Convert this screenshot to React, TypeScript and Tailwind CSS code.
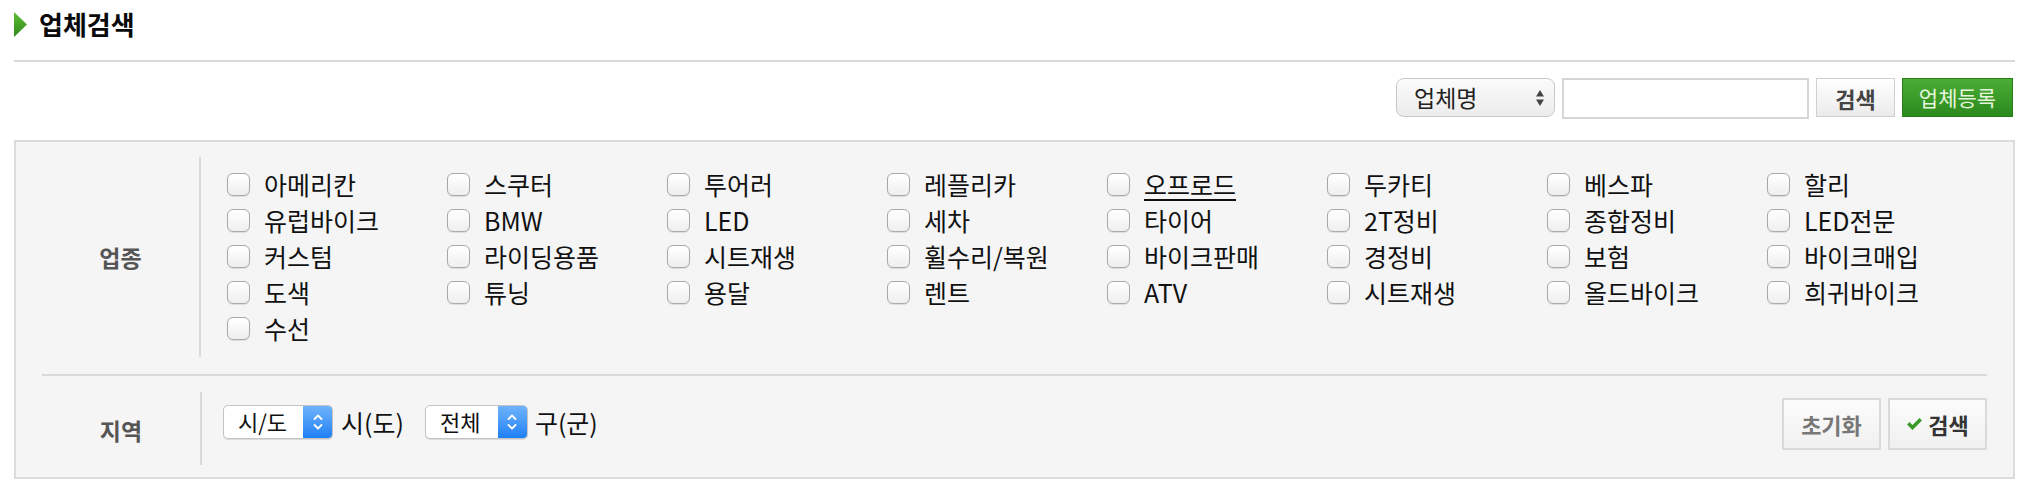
import React from 'react';

const FONT = { fontFamily: '"Noto Sans CJK KR", "Noto Sans", sans-serif' };

const CATEGORIES = [
  '아메리칸', '스쿠터', '투어러', '레플리카', '오프로드', '두카티', '베스파', '할리',
  '유럽바이크', 'BMW', 'LED', '세차', '타이어', '2T정비', '종합정비', 'LED전문',
  '커스텀', '라이딩용품', '시트재생', '휠수리/복원', '바이크판매', '경정비', '보험', '바이크매입',
  '도색', '튜닝', '용달', '렌트', 'ATV', '시트재생', '올드바이크', '희귀바이크',
  '수선',
];

function CheckItem({ label, underline }: { label: string; underline?: boolean }) {
  return (
    <label className="flex items-center gap-[14px] h-[36px] cursor-pointer">
      <span className="block shrink-0 w-[23px] h-[23px] rounded-[6px] border border-[#a9a9a9] bg-gradient-to-b from-white to-[#efefef] shadow-[0_1px_1px_rgba(0,0,0,0.1)]" />
      <span className={`text-[25px] leading-[28px] text-[#111] whitespace-nowrap ${underline ? 'underline underline-offset-[4px]' : ''}`}>
        {label}
      </span>
    </label>
  );
}

function BlueSelect({ value, width }: { value: string; width: string }) {
  return (
    <div
      className={`${width} h-[34px] flex rounded-[5px] border border-[#c4c4c4] bg-white shadow-[0_1px_1px_rgba(0,0,0,0.12)] overflow-hidden`}
    >
      <span className="flex-1 pl-[14px] text-[22px] leading-[31px] text-[#111]">{value}</span>
      <span className="w-[29px] flex items-center justify-center bg-gradient-to-b from-[#6db3fb] to-[#1b7ff4]">
        <svg width="12" height="20" viewBox="0 0 12 20" fill="none" stroke="white" strokeWidth="1.8" strokeLinecap="round" strokeLinejoin="round">
          <path d="M2.5 7 L6 3.5 L9.5 7" />
          <path d="M2.5 13 L6 16.5 L9.5 13" />
        </svg>
      </span>
    </div>
  );
}

export default function App() {
  return (
    <div className="w-[2028px] h-[492px] bg-white pl-[14px] pr-[13px]" style={FONT}>
      {/* Title */}
      <div className="flex items-center gap-[12px] h-[48px]">
        <svg width="13" height="25" viewBox="0 0 13 25">
          <defs>
            <linearGradient id="ga" x1="0" y1="0" x2="0" y2="1">
              <stop offset="0" stopColor="#62bd35" />
              <stop offset="1" stopColor="#2f8b1b" />
            </linearGradient>
          </defs>
          <polygon points="0,0 13,12.5 0,25" fill="url(#ga)" />
        </svg>
        <h1 className="text-[26px] font-bold text-[#0a0a0a] leading-none">업체검색</h1>
      </div>
      <div className="mt-[12px] h-[2px] bg-[#d8d8d8]" />

      {/* Toolbar */}
      <div className="mt-[16px] flex justify-end items-start gap-[7px] pr-[2px]">
        <div className="w-[159px] h-[39px] flex items-center rounded-[8px] border border-[#c8c8c8] bg-gradient-to-b from-[#fbfbfb] to-[#ececec] pl-[17px] pr-[9px]">
          <span className="flex-1 text-[23px] text-[#222] leading-none">업체명</span>
          <svg width="10" height="20" viewBox="0 0 10 20" fill="#444">
            <polygon points="5,2 9,8.5 1,8.5" />
            <polygon points="1,11.5 9,11.5 5,18" />
          </svg>
        </div>
        <input className="w-[247px] h-[41px] border-2 border-[#d6d6d6] bg-white outline-none" />
        <button className="w-[79px] h-[39px] border border-[#d0d0d0] bg-gradient-to-b from-white to-[#ebebeb] text-[22px] font-bold text-[#444] leading-none">
          검색
        </button>
        <button className="w-[111px] h-[39px] border border-[#2a7d1b] bg-gradient-to-b from-[#4aad35] to-[#2b8a1c] text-[21px] text-[#e6f4dc] leading-none">
          업체등록
        </button>
      </div>

      {/* Search panel */}
      <div className="mt-[21px] h-[339px] border-2 border-[#dcdcdc] bg-[#f5f5f5] px-[26px]">
        {/* 업종 */}
        <div className="flex pt-[15px] pb-[17px] border-b-2 border-[#dadada]">
          <div className="w-[158px] flex items-center justify-center text-[23px] font-bold text-[#555]">업종</div>
          <div className="border-l-2 border-[#dadada] pl-[26px] pt-[9px] pb-[11px]">
            <div className="grid grid-cols-[repeat(8,220px)]">
              {CATEGORIES.map((c, i) => (
                <CheckItem key={i} label={c} underline={i === 4} />
              ))}
            </div>
          </div>
        </div>

        {/* 지역 */}
        <div className="flex pt-[16px]">
          <div className="w-[158px] flex items-center justify-center text-[23px] font-bold text-[#555] pt-[4px]">지역</div>
          <div className="flex-1 h-[73px] border-l-2 border-[#dadada] pl-[21px] flex items-start">
            <div className="mt-[13px] flex items-center">
              <BlueSelect value="시/도" width="w-[110px]" />
              <span className="ml-[8px] text-[25px] leading-[34px] text-[#111]">시(도)</span>
              <div className="ml-[21px]">
                <BlueSelect value="전체" width="w-[103px]" />
              </div>
              <span className="ml-[7px] text-[25px] leading-[34px] text-[#111]">구(군)</span>
            </div>
            <div className="ml-auto mt-[6px] flex gap-[7px]">
              <button className="w-[99px] h-[52px] border-2 border-[#dadada] bg-gradient-to-b from-[#fcfcfc] to-[#f0f0f0] text-[22px] font-bold text-[#777] leading-none">
                초기화
              </button>
              <button className="w-[99px] h-[52px] border-2 border-[#dadada] bg-gradient-to-b from-[#fcfcfc] to-[#f0f0f0] text-[22px] font-bold text-[#333] leading-none flex items-center justify-center gap-[5px]">
                <svg width="17" height="14" viewBox="0 0 17 14">
                  <path d="M1 7.5 L3.5 5 L6.5 8 L13.5 1 L16 3.5 L6.5 13 Z" fill="#3a9a28" />
                </svg>
                검색
              </button>
            </div>
          </div>
        </div>
      </div>
    </div>
  );
}
